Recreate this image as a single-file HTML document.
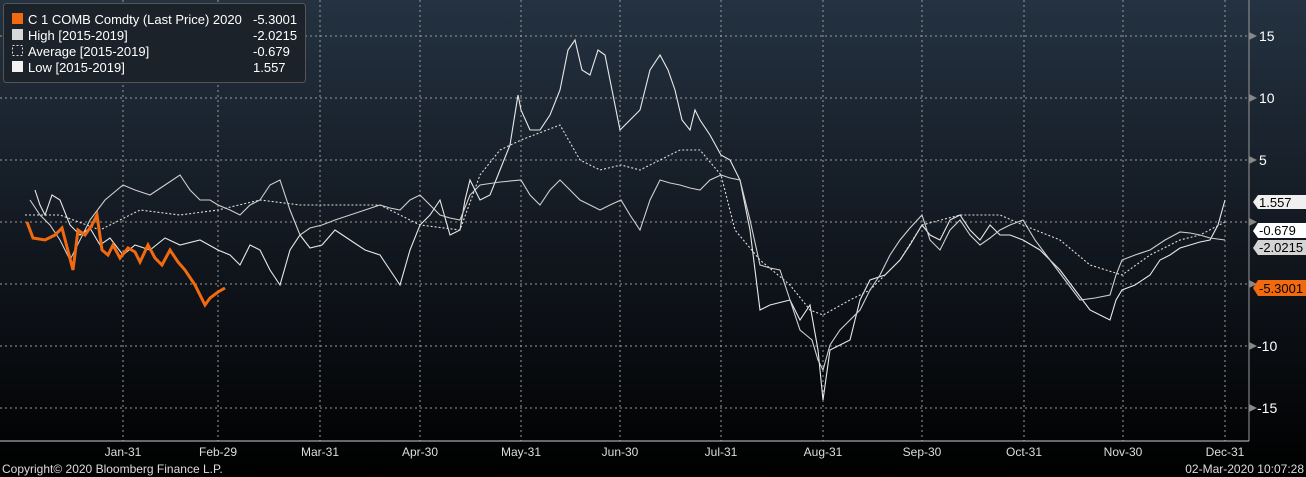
<!DOCTYPE html>
<html><head><meta charset="utf-8"><style>
html,body{margin:0;padding:0;width:1306px;height:477px;overflow:hidden;background:#000}
svg text{font-family:"Liberation Sans",sans-serif}
</style></head><body>
<svg width="1306" height="477" viewBox="0 0 1306 477" xmlns="http://www.w3.org/2000/svg">
<defs><linearGradient id="bg" x1="0" y1="0" x2="0" y2="1">
<stop offset="0" stop-color="#243241"/><stop offset="0.5" stop-color="#121820"/><stop offset="1" stop-color="#000"/></linearGradient></defs>
<rect width="1306" height="477" fill="url(#bg)"/>
<g stroke="#9a9a9a" stroke-width="1" stroke-dasharray="2,3" fill="none">
<path d="M0 36H1249M0 98H1249M0 160H1249M0 222H1249M0 284H1249M0 346H1249M0 408H1249"/>
<path d="M123 0V441M218 0V441M320 0V441M420 0V441M521 0V441M620 0V441M721 0V441M823 0V441M922 0V441M1024 0V441M1123 0V441M1225 0V441"/>
</g>
<line x1="1249" y1="0" x2="1249" y2="441" stroke="#999"/>
<line x1="0" y1="441" x2="1249" y2="441" stroke="#ccc"/>
<g fill="none" stroke-width="1.1">
<polyline stroke="#e8e8e8" points="35,190 40,205 45,215 52,195 60,200 70,225 80,235 90,228 100,245 110,238 123,255 135,245 150,250 165,238 180,245 200,240 218,250 230,255 240,265 250,245 260,250 270,270 280,285 290,250 300,235 310,248 322,245 335,230 350,240 365,250 380,255 390,270 400,285 410,250 420,225 430,215 440,200 450,235 460,230 465,200 470,180 480,200 490,195 500,170 510,145 518,95 521,110 530,130 540,130 550,115 560,90 568,50 575,40 582,70 590,75 598,50 605,55 612,90 620,130 630,120 640,110 650,70 660,55 668,70 675,90 682,120 690,130 695,110 700,120 710,135 721,155 730,160 740,180 750,230 760,310 770,305 790,300 800,320 810,305 818,350 823,400 830,350 840,345 850,340 860,300 870,280 885,275 900,260 910,245 922,225 930,235 940,240 950,220 960,215 970,230 980,240 990,225 1000,235 1010,235 1023,240 1040,250 1060,270 1075,290 1090,310 1100,315 1110,320 1116,300 1122,290 1135,285 1150,275 1160,260 1170,255 1180,248 1190,245 1200,242 1210,240 1218,225 1225,200"/>
<polyline stroke="#ddd" stroke-dasharray="2,2" points="25,215 60,215 100,230 140,210 180,215 218,210 260,200 300,205 340,205 380,205 420,225 460,230 480,175 500,150 521,140 560,125 580,160 600,170 621,165 640,170 680,150 700,150 721,175 735,230 760,260 790,285 810,310 823,315 850,300 870,290 900,260 922,225 960,215 1000,215 1023,225 1060,240 1090,265 1122,275 1150,255 1180,240 1200,235 1225,222"/>
<polyline stroke="#cfcfcf" points="30,200 40,215 50,225 60,240 70,260 80,240 90,220 105,200 123,185 135,190 150,195 165,185 180,175 190,190 200,200 210,200 218,205 230,210 240,215 250,205 260,200 270,185 280,180 290,210 300,235 310,228 322,225 335,220 350,215 365,210 380,205 390,208 400,210 410,200 420,195 430,205 440,215 450,218 460,220 470,195 480,185 500,182 521,180 530,195 540,205 550,190 560,180 570,190 580,200 590,205 600,210 610,205 621,200 630,215 640,230 650,200 660,180 670,183 680,185 690,188 700,190 710,180 721,175 730,178 740,180 750,220 760,265 770,268 780,270 790,300 800,330 806,335 812,340 818,360 823,370 830,345 840,330 850,320 860,310 870,290 880,275 890,255 900,240 910,228 922,215 930,240 940,250 950,230 960,220 970,235 980,245 990,238 1000,230 1010,225 1023,220 1035,240 1050,260 1065,280 1080,300 1095,298 1110,295 1116,275 1122,260 1135,255 1150,250 1165,240 1180,232 1190,233 1200,235 1210,238 1225,240"/>
<polyline stroke="#f26a10" stroke-width="3" points="27,222 33,238 45,240 55,235 62,228 73,270 78,230 85,235 92,225 97,215 102,250 108,255 113,245 120,258 128,248 135,252 140,262 148,245 155,258 162,265 170,250 178,262 185,270 195,285 205,305 210,298 218,292 225,288"/>
</g>
<g fill="#888"><path d="M1249 32l8 4-8 4z M1249 94l8 4-8 4z M1249 156l8 4-8 4z M1249 218l8 4-8 4z M1249 280l8 4-8 4z M1249 342l8 4-8 4z M1249 404l8 4-8 4z"/></g>
<g fill="#fff" font-size="14">
<text x="1259" y="41">15</text><text x="1259" y="103">10</text><text x="1259" y="165">5</text>
<text x="1257" y="351">-10</text><text x="1257" y="413">-15</text>
</g>
<path d="M1258 195H1306V209H1258l-5-7z" fill="#f0f0f0"/>
<text x="1259" y="207" font-size="13" fill="#000">1.557</text>
<path d="M1258 223H1306V238H1258l-5-7z" fill="#fff"/>
<text x="1259" y="235" font-size="13" fill="#000">-0.679</text>
<path d="M1258 240H1306V255H1258l-5-7z" fill="#d4d4d4"/>
<text x="1259" y="252" font-size="13" fill="#000">-2.0215</text>
<path d="M1258 280H1306V296H1258l-5-8z" fill="#f26a10"/>
<text x="1259" y="293" font-size="13" fill="#000">-5.3001</text>
<g fill="#ddd" font-size="12" text-anchor="middle">
<text x="123" y="456">Jan-31</text><text x="218" y="456">Feb-29</text><text x="320" y="456">Mar-31</text><text x="420" y="456">Apr-30</text><text x="521" y="456">May-31</text><text x="620" y="456">Jun-30</text><text x="721" y="456">Jul-31</text><text x="823" y="456">Aug-31</text><text x="922" y="456">Sep-30</text><text x="1024" y="456">Oct-31</text><text x="1123" y="456">Nov-30</text><text x="1225" y="456">Dec-31</text>
</g>
<text x="2" y="473" font-size="12" fill="#ddd">Copyright© 2020 Bloomberg Finance L.P.</text>
<text x="1304" y="473" font-size="12" fill="#ddd" text-anchor="end">02-Mar-2020 10:07:28</text>
<rect x="3.5" y="3.5" width="302" height="79" rx="3" fill="#1b2229" stroke="#555"/>
<rect x="12" y="13" width="11" height="11" fill="#f26a10"/>
<rect x="12" y="29" width="11" height="11" fill="#d8d8d8"/>
<rect x="12.5" y="45.5" width="10" height="10" fill="none" stroke="#ddd" stroke-dasharray="2,2"/>
<rect x="12" y="61" width="11" height="11" fill="#f2f2f2"/>
<g fill="#fff" font-size="13">
<text x="28" y="24">C 1 COMB Comdty (Last Price) 2020</text>
<text x="28" y="40">High [2015-2019]</text>
<text x="28" y="56">Average [2015-2019]</text>
<text x="28" y="72">Low [2015-2019]</text>
<text x="253" y="24">-5.3001</text>
<text x="253" y="40">-2.0215</text>
<text x="253" y="56">-0.679</text>
<text x="253" y="72">1.557</text>
</g>
</svg>
</body></html>
